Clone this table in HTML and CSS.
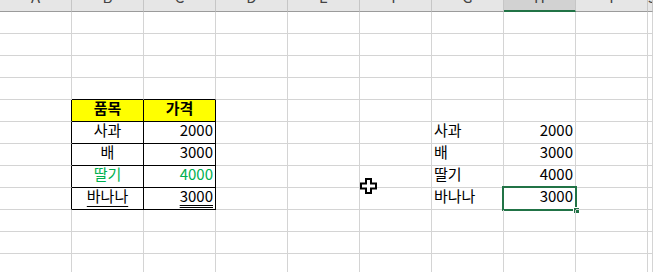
FILE: index.html
```html
<!DOCTYPE html>
<html lang="ko">
<head>
<meta charset="utf-8">
<title>Sheet</title>
<link rel="stylesheet" href="styles.css">
</head>
<body>
<div class="sheet">
  <div class="h"><span>A</span></div><div class="h"><span>B</span></div><div class="h"><span>C</span></div><div class="h"><span>D</span></div><div class="h"><span>E</span></div><div class="h"><span>F</span></div><div class="h"><span>G</span></div><div class="h sel"><span>H</span></div><div class="h"><span>I</span></div><div class="h"><span>J</span></div>

  <div class="c"></div><div class="c"></div><div class="c"></div><div class="c"></div><div class="c"></div><div class="c"></div><div class="c"></div><div class="c"></div><div class="c"></div><div class="c"></div>
  <div class="c"></div><div class="c"></div><div class="c"></div><div class="c"></div><div class="c"></div><div class="c"></div><div class="c"></div><div class="c"></div><div class="c"></div><div class="c"></div>
  <div class="c"></div><div class="c"></div><div class="c"></div><div class="c"></div><div class="c"></div><div class="c"></div><div class="c"></div><div class="c"></div><div class="c"></div><div class="c"></div>
  <div class="c"></div><div class="c bt"></div><div class="c bt"></div><div class="c"></div><div class="c"></div><div class="c"></div><div class="c"></div><div class="c"></div><div class="c"></div><div class="c"></div>

  <div class="c bl"></div><div class="c tb ctr yel"><span>품목</span></div><div class="c tb ctr yel"><span>가격</span></div><div class="c"></div><div class="c"></div><div class="c"></div><div class="c"></div><div class="c"></div><div class="c"></div><div class="c"></div>
  <div class="c bl"></div><div class="c tb ctr"><span>사과</span></div><div class="c tb num"><span>2000</span></div><div class="c"></div><div class="c"></div><div class="c"></div><div class="c"><span>사과</span></div><div class="c num"><span>2000</span></div><div class="c"></div><div class="c"></div>
  <div class="c bl"></div><div class="c tb ctr"><span>배</span></div><div class="c tb num"><span>3000</span></div><div class="c"></div><div class="c"></div><div class="c"></div><div class="c"><span>배</span></div><div class="c num"><span>3000</span></div><div class="c"></div><div class="c"></div>
  <div class="c bl"></div><div class="c tb ctr green"><span>딸기</span></div><div class="c tb num green"><span>4000</span></div><div class="c"></div><div class="c"></div><div class="c"></div><div class="c"><span>딸기</span></div><div class="c num"><span>4000</span></div><div class="c"></div><div class="c"></div>
  <div class="c bl"></div><div class="c tb ctr u1"><span>바나나</span></div><div class="c tb num u2"><span>3000</span></div><div class="c"></div><div class="c"></div><div class="c"></div><div class="c"><span>바나나</span></div><div class="c num"><span>3000</span><div class="selbox"><div class="handle"></div></div></div><div class="c"></div><div class="c"></div>

  <div class="c"></div><div class="c"></div><div class="c"></div><div class="c"></div><div class="c"></div><div class="c"></div><div class="c"></div><div class="c"></div><div class="c"></div><div class="c"></div>
  <div class="c"></div><div class="c"></div><div class="c"></div><div class="c"></div><div class="c"></div><div class="c"></div><div class="c"></div><div class="c"></div><div class="c"></div><div class="c"></div>
  <div class="c"></div><div class="c"></div><div class="c"></div><div class="c"></div><div class="c"></div><div class="c"></div><div class="c"></div><div class="c"></div><div class="c"></div><div class="c"></div>
</div>
<svg class="cursor" width="18" height="16" viewBox="0 0 18 16" aria-hidden="true">
  <path d="M6 1 H11 V5.5 H16 V10.5 H11 V15 H6 V10.5 H1 V5.5 H6 Z" fill="#fff" stroke="#000" stroke-width="2" stroke-linejoin="miter"/>
</svg>
</body>
</html>
```

FILE: styles.css
```css
html, body {
  margin: 0;
  padding: 0;
  background: #ffffff;
  overflow: hidden;
}
body {
  font-family: "Noto Sans CJK KR", "Malgun Gothic", sans-serif;
  position: relative;
  width: 653px;
  height: 272px;
}
.sheet {
  display: grid;
  grid-template-columns: repeat(9, 72px) 5px;
  grid-template-rows: 12px;
  grid-auto-rows: 22px;
  width: 653px;
  overflow: hidden;
}
.h {
  box-sizing: border-box;
  background: #e6e6e6;
  border-right: 1px solid #c6c6c6;
  border-bottom: 1px solid #9b9b9b;
  overflow: hidden;
  text-align: center;
  font-size: 15px;
  line-height: 15px;
  color: #444444;
}
.h span {
  display: block;
  margin-top: -11px;
}
.h.sel {
  background: #d2d2d2;
  border-bottom: 2px solid #217346;
}
.c {
  box-sizing: border-box;
  position: relative;
  border-right: 1px solid #d4d4d4;
  border-bottom: 1px solid #d4d4d4;
  padding: 0 2px;
  font-size: 15px;
  line-height: 15px;
  white-space: nowrap;
  color: #000000;
}
.bl {
  border-right-color: #000000;
}
.bt {
  border-bottom-color: #000000;
}
.tb {
  border-right-color: #000000;
  border-bottom-color: #000000;
}
.ctr {
  text-align: center;
}
.num {
  text-align: right;
}
.yel {
  background: #ffff00;
  font-weight: bold;
}
.green {
  color: #00b050;
}
.u1 span {
  text-decoration: underline;
  text-underline-offset: 4px;
  text-decoration-thickness: 1px;
}
.u2 span {
  text-decoration: underline double;
  text-underline-offset: 3px;
  text-decoration-thickness: 1px;
}
.selbox {
  position: absolute;
  left: -2px;
  top: -2px;
  width: 75px;
  height: 25px;
  box-sizing: border-box;
  border: 2px solid #217346;
}
.handle {
  position: absolute;
  left: 69px;
  top: 19px;
  width: 5px;
  height: 5px;
  background: #217346;
  border: 1px solid #ffffff;
}
.cursor {
  position: absolute;
  left: 360px;
  top: 178px;
}
```
